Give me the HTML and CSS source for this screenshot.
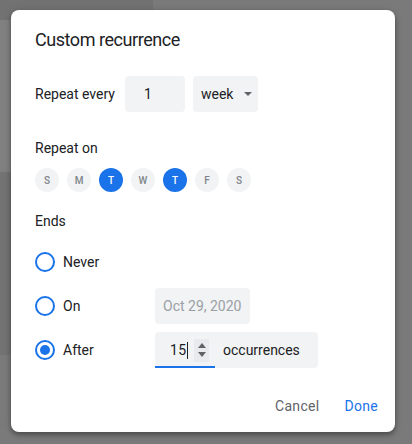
FILE: index.html
```html
<!DOCTYPE html>
<html>
<head>
<meta charset="utf-8">
<link rel="stylesheet" href="styles.css">
</head>
<body>
<div class="backdrop">
  <div class="bg-block bg-top"></div>
  <div class="bg-block bg-left1"></div>
  <div class="bg-block bg-left2"></div>
  <div class="dialog">
    <h1 class="title">Custom recurrence</h1>
    <div class="repeat-row">
      <span class="label">Repeat every</span>
      <div class="field num-field">1</div>
      <div class="field select-field">week<span class="caret-down"></span></div>
    </div>
    <div class="section-label repeat-on">Repeat on</div>
    <div class="days">
      <span class="day">S</span>
      <span class="day">M</span>
      <span class="day on">T</span>
      <span class="day">W</span>
      <span class="day on">T</span>
      <span class="day">F</span>
      <span class="day">S</span>
    </div>
    <div class="section-label ends">Ends</div>
    <div class="end-rows">
      <div class="end-row">
        <span class="radio"></span><span class="end-label">Never</span>
      </div>
      <div class="end-row">
        <span class="radio"></span><span class="end-label">On</span>
        <div class="field date-field">Oct 29, 2020</div>
      </div>
      <div class="end-row">
        <span class="radio checked"></span><span class="end-label">After</span>
        <div class="field after-field">
          <div class="count-input">
            <span class="count-text">15</span><span class="text-caret"></span>
            <span class="spinner"><span class="up"></span><span class="down"></span></span>
          </div>
          <span class="occ">occurrences</span>
        </div>
      </div>
    </div>
    <div class="actions">
      <span class="btn cancel">Cancel</span>
      <span class="btn done">Done</span>
    </div>
  </div>
</div>
</body>
</html>
```

FILE: styles.css
```css
html, body {
  margin: 0;
  padding: 0;
}
body {
  width: 412px;
  height: 444px;
  overflow: hidden;
  background: #7a7a7a;
  font-family: Roboto, "Liberation Sans", sans-serif;
  color: #202124;
}
.backdrop {
  position: relative;
  width: 412px;
  height: 444px;
  padding: 10px 0 0 11px;
  box-sizing: border-box;
}
.bg-block {
  position: absolute;
}
.bg-top {
  left: 0; top: 0; width: 153px; height: 20px;
  background: #727272;
}
.bg-left1 {
  left: 0; top: 20px; width: 11px; height: 152px;
  background: #808080;
}
.bg-left2 {
  left: 0; top: 172px; width: 11px; height: 183px;
  background: #737373;
}
.dialog {
  position: relative;
  width: 384px;
  height: 422px;
  box-sizing: border-box;
  background: #fff;
  border-radius: 8px;
  box-shadow: 0 4px 5px rgba(0,0,0,0.14), 0 1px 10px rgba(0,0,0,0.12), 0 2px 4px rgba(0,0,0,0.2);
  padding: 18px 9px 8px 24px;
  display: flex;
  flex-direction: column;
}
.title {
  margin: 0;
  font-size: 18px;
  font-weight: 400;
  line-height: 24px;
  height: 24px;
  letter-spacing: -0.45px;
}
.repeat-row {
  margin-top: 24px;
  display: flex;
  align-items: center;
  height: 36px;
  font-size: 14px;
}
.label {
  width: 90px;
}
.field {
  background: #f1f3f4;
  border-radius: 4px;
  height: 36px;
  box-sizing: border-box;
  display: flex;
  align-items: center;
  font-size: 14px;
}
.num-field {
  width: 60px;
  padding-left: 19px;
}
.select-field {
  margin-left: 8px;
  width: 65px;
  padding-left: 8px;
  position: relative;
}
.caret-down {
  margin-left: 11px;
  width: 0; height: 0;
  border-left: 4px solid transparent;
  border-right: 4px solid transparent;
  border-top: 4px solid #5f6368;
}
.section-label {
  font-size: 14px;
  line-height: 20px;
  height: 20px;
}
.repeat-on { margin-top: 26px; }
.days {
  margin-top: 10px;
  display: flex;
  gap: 8px;
}
.day {
  width: 24px;
  height: 24px;
  border-radius: 50%;
  background: #f1f3f4;
  color: #80868b;
  font-size: 10px;
  font-weight: 500;
  display: flex;
  align-items: center;
  justify-content: center;
}
.day.on {
  background: #1a73e8;
  color: #fff;
}
.ends { margin-top: 19px; }
.end-rows {
  margin-top: 13px;
  display: flex;
  flex-direction: column;
  gap: 8px;
}
.end-row {
  display: flex;
  align-items: center;
  height: 36px;
  font-size: 14px;
}
.radio {
  width: 20px;
  height: 20px;
  box-sizing: border-box;
  border: 2px solid #1a73e8;
  border-radius: 50%;
  display: flex;
  align-items: center;
  justify-content: center;
}
.radio.checked::after {
  content: "";
  width: 10px;
  height: 10px;
  border-radius: 50%;
  background: #1a73e8;
}
.end-label {
  margin-left: 8px;
  width: 92px;
}
.date-field {
  width: 95px;
  padding-left: 8px;
  color: #9aa0a6;
}
.after-field {
  width: 163px;
}
.count-input {
  width: 60px;
  height: 36px;
  box-sizing: border-box;
  border-bottom: 2px solid #1a73e8;
  border-radius: 4px 0 0 0;
  display: flex;
  align-items: center;
  padding: 2px 0 0 15px;
}
.count-text {
  letter-spacing: 0.3px;
}
.text-caret {
  width: 1px;
  height: 17px;
  background: #202124;
  margin-left: 1px;
}
.spinner {
  margin-left: 6px;
  width: 15px;
  height: 23px;
  background: #e8eaed;
  display: flex;
  flex-direction: column;
  align-items: center;
  justify-content: center;
  gap: 4px;
}
.spinner .up {
  width: 0; height: 0;
  border-left: 4px solid transparent;
  border-right: 4px solid transparent;
  border-bottom: 5px solid #5f6368;
}
.spinner .down {
  width: 0; height: 0;
  border-left: 4px solid transparent;
  border-right: 4px solid transparent;
  border-top: 5px solid #5f6368;
}
.occ {
  margin-left: 8px;
}
.actions {
  margin-top: 20px;
  display: flex;
  justify-content: flex-end;
  gap: 9px;
  height: 36px;
}
.btn {
  display: flex;
  align-items: center;
  padding: 0 8px;
  font-size: 14px;
  font-weight: 400;
  letter-spacing: 0.3px;
}
.cancel { color: #5f6368; }
.done { color: #1a73e8; }
```
